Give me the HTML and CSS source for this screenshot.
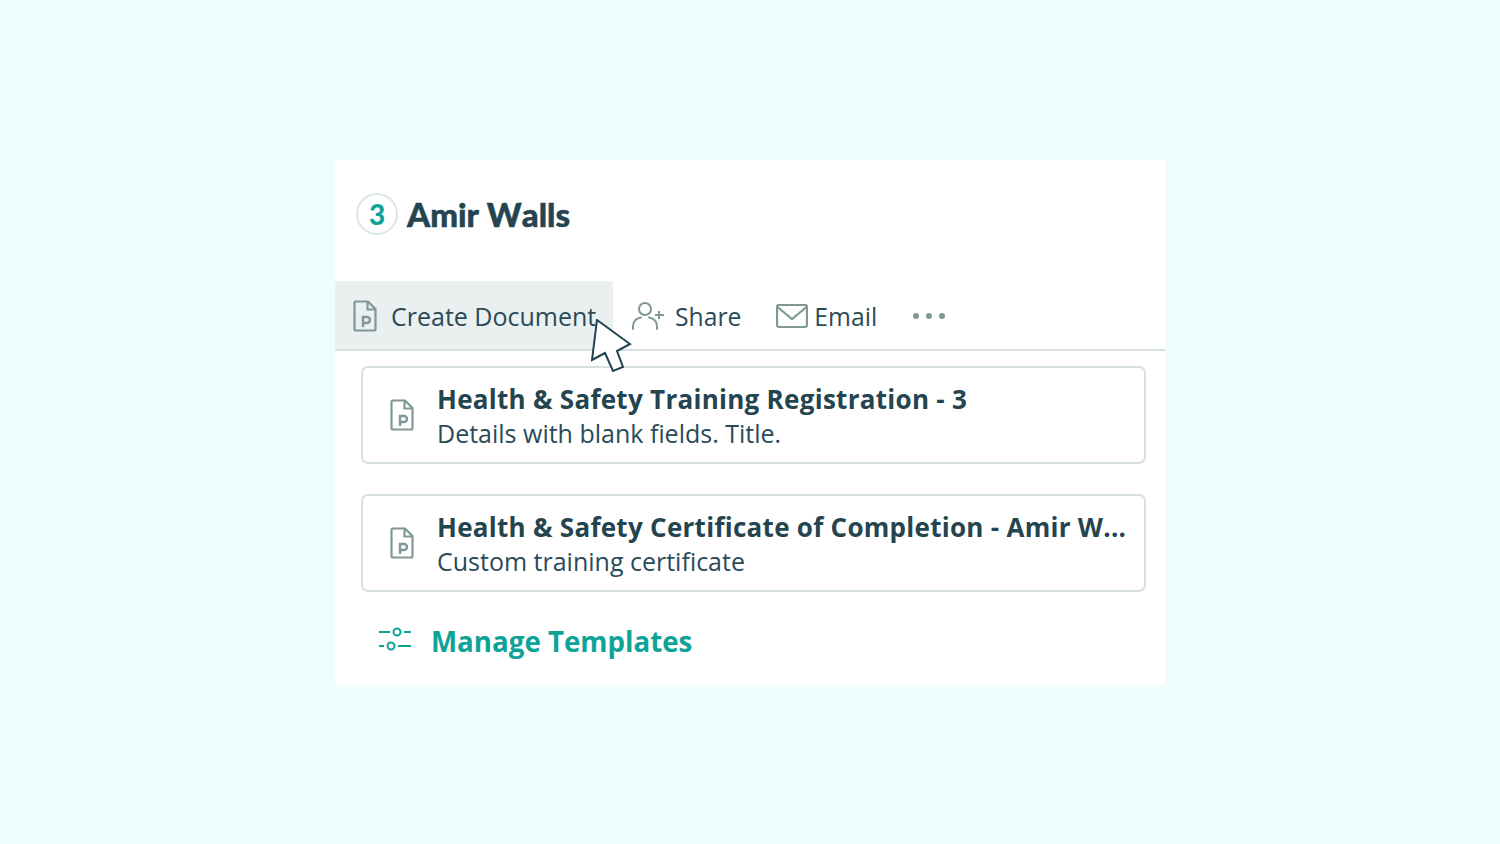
FILE: index.html
```html
<!DOCTYPE html>
<html lang="en">
<head>
    <meta charset="UTF-8">
    <meta name="viewport" content="width=device-width, initial-scale=1.0">
    <title>Create Document</title>
    <link rel="stylesheet" href="styles.css">
</head>
<body>
    <main class="panel">
        <header class="contact">
            <div class="badge">3</div>
            <h1>Amir Walls</h1>
        </header>

        <nav class="toolbar">
            <div class="tool tool-active">
                <svg class="icon-doc" viewBox="0 0 24 32" fill="none">
                    <path d="M2.5 1.5H15L22.5 9V29a1.5 1.5 0 0 1-1.5 1.5H3A1.5 1.5 0 0 1 1.5 29V3A1.5 1.5 0 0 1 2.5 1.5Z" stroke="#7f9896" stroke-width="2.2" stroke-linejoin="round"/>
                    <path d="M14.5 2V9.5H22" stroke="#7f9896" stroke-width="2.2"/>
                    <path d="M10 27V17H14a3 3 0 0 1 0 6H10" stroke="#7f9896" stroke-width="2.4"/>
                </svg>
                <span>Create Document</span>
            </div>
            <div class="tool tool-share">
                <svg class="icon-share" viewBox="0 0 33 30" fill="none" stroke="#7f9896" stroke-width="2">
                    <circle cx="13" cy="8" r="6"/>
                    <path d="M1 28V25C1 20 5 17 9 16.5M17 16.5C21 17 25 20 25 25V28" stroke-linecap="round"/>
                    <path d="M27 10V18M23 14H32"/>
                </svg>
                <span>Share</span>
            </div>
            <div class="tool tool-email">
                <svg class="icon-mail" viewBox="0 0 32 24" fill="none" stroke="#7f9896" stroke-width="2.2">
                    <rect x="1" y="1" width="30" height="22" rx="2"/>
                    <path d="M1.5 3L16 15L30.5 3"/>
                </svg>
                <span>Email</span>
            </div>
            <div class="more"><i></i><i></i><i></i></div>
        </nav>

        <section class="templates">
            <div class="card">
                <svg class="icon-doc" viewBox="0 0 24 32" fill="none">
                    <path d="M2.5 1.5H15L22.5 9V29a1.5 1.5 0 0 1-1.5 1.5H3A1.5 1.5 0 0 1 1.5 29V3A1.5 1.5 0 0 1 2.5 1.5Z" stroke="#7f9896" stroke-width="2.2" stroke-linejoin="round"/>
                    <path d="M14.5 2V9.5H22" stroke="#7f9896" stroke-width="2.2"/>
                    <path d="M10 27V17H14a3 3 0 0 1 0 6H10" stroke="#7f9896" stroke-width="2.4"/>
                </svg>
                <div class="card-text">
                    <div class="card-title">Health &amp; Safety Training Registration - 3</div>
                    <div class="card-sub">Details with blank fields. Title.</div>
                </div>
            </div>
            <div class="card">
                <svg class="icon-doc" viewBox="0 0 24 32" fill="none">
                    <path d="M2.5 1.5H15L22.5 9V29a1.5 1.5 0 0 1-1.5 1.5H3A1.5 1.5 0 0 1 1.5 29V3A1.5 1.5 0 0 1 2.5 1.5Z" stroke="#7f9896" stroke-width="2.2" stroke-linejoin="round"/>
                    <path d="M14.5 2V9.5H22" stroke="#7f9896" stroke-width="2.2"/>
                    <path d="M10 27V17H14a3 3 0 0 1 0 6H10" stroke="#7f9896" stroke-width="2.4"/>
                </svg>
                <div class="card-text">
                    <div class="card-title">Health &amp; Safety Certificate of Completion - Amir W...</div>
                    <div class="card-sub">Custom training certificate</div>
                </div>
            </div>
        </section>

        <a class="manage">
            <svg class="icon-sliders" viewBox="0 0 33 28" fill="none" stroke="#0fa398" stroke-width="2">
                <path d="M0 5H11M25 5H32M0 19H5M19 19H32"/>
                <circle cx="18" cy="5" r="3.5"/>
                <circle cx="12" cy="19" r="3.5"/>
            </svg>
            <span>Manage Templates</span>
        </a>

        <svg class="cursor" viewBox="0 0 42 54">
            <path d="M6 1L39 25L26 32L32 48L22 52L14 34L1 41Z" fill="#fff" stroke="#1f4450" stroke-width="2"/>
        </svg>
    </main>
</body>
</html>
```

FILE: styles.css
```css
*{
    margin:0;
    padding:0;
    box-sizing:border-box;
}
body{
    height:844px;
    overflow:hidden;
    background-color:#f0fdfd;
    display:flex;
    justify-content:center;
    align-items:flex-start;
    padding-top:160px;
    font-family:"Open Sans","Noto Sans",sans-serif;
    color:#2a4a58;
}
.panel{
    position:relative;
    width:830px;
    height:525px;
    background-color:#fff;
}
.contact{
    display:flex;
    align-items:center;
    gap:9px;
    height:121px;
    padding:0 0 14px 21px;
}
.badge{
    width:42px;
    height:42px;
    border-radius:50%;
    border:2px solid #dbe7e6;
    display:flex;
    align-items:center;
    justify-content:center;
    font-family:Lato,sans-serif;
    font-weight:900;
    font-size:28px;
    color:#0fa398;
}
h1{
    font-family:Lato,sans-serif;
    font-weight:900;
    font-size:33px;
    font-kerning:none;
    -webkit-text-stroke:0.5px #24444f;
    color:#24444f;
}
.toolbar{
    display:flex;
    align-items:center;
    height:70px;
    border-bottom:2px solid #d5e0df;
}
.tool{
    display:flex;
    align-items:center;
    height:100%;
    font-size:24.7px;
    padding-top:2px;
}
.tool-active{
    width:278px;
    padding-left:18px;
    gap:14px;
    font-size:25px;
    background-color:#e9f0ef;
    border-radius:2px 2px 0 0;
}
.tool-share{
    margin-left:19px;
    gap:10px;
}
.tool-email{
    margin-left:35px;
    gap:6px;
}
.icon-share{
    width:33px;
    height:30px;
}
.icon-mail{
    width:32px;
    height:24px;
}
.more{
    display:flex;
    gap:7px;
    margin-left:36px;
    padding-top:2px;
}
.more i{
    width:6px;
    height:6px;
    border-radius:50%;
    background-color:#7f9896;
}
.templates{
    display:flex;
    flex-direction:column;
    gap:30px;
    padding:15px 19px 0 26px;
}
.card{
    display:flex;
    align-items:center;
    height:98px;
    padding-left:27px;
    gap:23px;
    border:2px solid #d5e0df;
    border-radius:7px;
}
.icon-doc{
    width:24px;
    height:32px;
    flex:none;
}
.card-text{
    min-width:0;
    padding-top:1px;
}
.card-title{
    font-size:26px;
    font-weight:700;
    letter-spacing:0.28px;
    line-height:35px;
    white-space:nowrap;
    color:#24444f;
}
.card-sub{
    font-size:25px;
    line-height:33px;
}
.manage{
    display:flex;
    align-items:center;
    gap:19px;
    margin:30px 0 0 44px;
    font-size:27.7px;
    font-weight:700;
    color:#0fa398;
}
.icon-sliders{
    width:33px;
    height:28px;
}
.cursor{
    position:absolute;
    left:256px;
    top:159px;
    width:42px;
    height:54px;
}
```
